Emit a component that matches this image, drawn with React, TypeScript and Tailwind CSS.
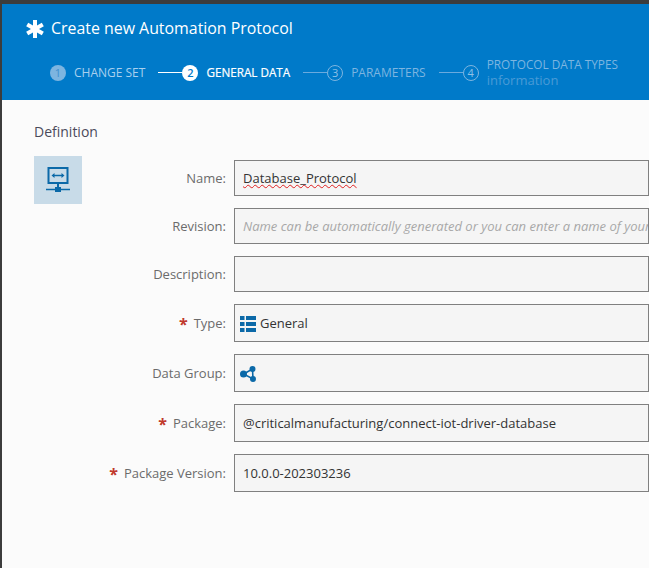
const font = { fontFamily: '"Open Sans", sans-serif' }

function Step({ n, label, state, size }: { n: number; label: string; state: 'done' | 'active' | 'todo'; size: string }) {
  return (
    <div className="flex shrink-0 items-center whitespace-nowrap">
      {state === 'done' && (
        <span className="flex h-4 w-4 items-center justify-center rounded-full bg-[#7db5e0] text-[11px] text-[#3f8fce]">{n}</span>
      )}
      {state === 'active' && (
        <span className="flex h-4 w-4 items-center justify-center rounded-full bg-white text-[11px] font-semibold text-[#007ac9]">{n}</span>
      )}
      {state === 'todo' && (
        <span className="flex h-4 w-4 items-center justify-center rounded-full border border-[#7db5e0] text-[11px] text-[#8fc0e6]">{n}</span>
      )}
      <span
        className={
          state === 'active'
            ? `ml-2 ${size} text-white [-webkit-text-stroke:0.2px_white]`
            : state === 'done'
              ? `ml-2 ${size} text-[#a9d0ee]`
              : `ml-2 ${size} text-[#7db5e0]`
        }
      >
        {label}
      </span>
    </div>
  )
}

function Line({ on }: { on?: boolean }) {
  return <div className={on ? 'ml-[13px] h-px w-6 shrink-0 bg-white' : 'ml-[13px] h-px w-6 shrink-0 bg-[#6aaade]'} />
}

function Label({ text, required }: { text: string; required?: boolean }) {
  return (
    <div className="flex w-[200px] shrink-0 items-center justify-end pr-2 pt-px text-[13px] text-[#6b6b6b]">
      {required && <span className="mr-[6px] text-[16px] font-bold leading-none text-[#c0392b]">*</span>}
      {text}:
    </div>
  )
}

function Field({ label, required, tall, children }: { label: string; required?: boolean; tall?: boolean; children?: React.ReactNode }) {
  return (
    <div className="mb-3 flex">
      <Label text={label} required={required} />
      <div
        className={
          tall
            ? 'flex h-[38px] min-w-0 flex-1 items-center overflow-hidden whitespace-nowrap border border-[#808080] bg-[#f5f5f5] pl-2 pt-px text-[13px] text-[#333]'
            : 'flex h-9 min-w-0 flex-1 items-center overflow-hidden whitespace-nowrap border border-[#808080] bg-[#f5f5f5] pl-2 pt-px text-[13px] text-[#333]'
        }
      >
        {children}
      </div>
    </div>
  )
}

function StarIcon() {
  return (
    <svg width="18" height="18" viewBox="0 0 18 18" className="shrink-0" stroke="white" strokeWidth="4" strokeLinecap="butt">
      <path d="M9 0v18" />
      <path d="M1.2 4.5l15.6 9" />
      <path d="M1.2 13.5l15.6-9" />
    </svg>
  )
}

function ProtocolIcon() {
  return (
    <svg width="26" height="26" viewBox="0 0 26 26" fill="none">
      <rect x="3.5" y="1" width="19" height="15" stroke="#0b69a8" strokeWidth="2" />
      <path d="M8 8.5h10" stroke="#0b69a8" strokeWidth="1.5" />
      <path d="M6.5 8.5 9.5 6v5zM19.5 8.5 16.5 6v5z" fill="#0b69a8" />
      <path d="M13 16v5" stroke="#0b69a8" strokeWidth="2" />
      <path d="M1 22.5h24" stroke="#0b69a8" strokeWidth="1.5" />
      <rect x="10" y="20" width="6" height="5" fill="#0b69a8" />
    </svg>
  )
}

function ListIcon() {
  return (
    <svg width="16" height="16" viewBox="0 0 16 16" fill="#0b69a8" className="-ml-[3px] mr-1 shrink-0">
      <rect x="0" y="0" width="4.5" height="4" />
      <rect x="6" y="0" width="10" height="4" />
      <rect x="0" y="6" width="4.5" height="4" />
      <rect x="6" y="6" width="10" height="4" />
      <rect x="0" y="12" width="4.5" height="4" />
      <rect x="6" y="12" width="10" height="4" />
    </svg>
  )
}

function ShareIcon() {
  return (
    <svg width="16" height="16" viewBox="0 0 16 16" className="-ml-[3px] shrink-0">
      <path d="M3.5 8 12.5 3 13 13z" fill="none" stroke="#0b69a8" strokeWidth="1.6" />
      <circle cx="3.5" cy="8" r="3.5" fill="#0b69a8" />
      <circle cx="12.5" cy="3" r="3" fill="#0b69a8" />
      <circle cx="13" cy="13" r="3" fill="#0b69a8" />
    </svg>
  )
}

export default function App() {
  return (
    <div className="h-[568px] w-[649px] overflow-hidden bg-[#3c3c3c] pl-[2px] pt-1" style={font}>
      <div className="flex h-full flex-col">
        {/* Header */}
        <div className="h-[96px] shrink-0 overflow-hidden bg-[#007ac9] pl-6">
          <div className="flex items-center pt-[13px] text-white">
            <StarIcon />
            <span className="ml-[7px] text-[15.9px]">Create new Automation Protocol</span>
          </div>
          <div className="mt-[15px] flex items-center pl-6">
            <Step n={1} label="CHANGE SET" state="done" size="text-xs" />
            <Line on />
            <Step n={2} label="GENERAL DATA" state="active" size="text-[11.7px]" />
            <Line />
            <Step n={3} label="PARAMETERS" state="todo" size="text-xs" />
            <Line />
            <div className="flex shrink-0 items-center">
              <span className="flex h-4 w-4 items-center justify-center rounded-full border border-[#7db5e0] text-[11px] text-[#8fc0e6]">4</span>
              <div className="mb-[2px] ml-2 text-[11.8px] leading-4 text-[#7db5e0]">
                <div className="whitespace-nowrap">PROTOCOL DATA TYPES</div>
                <div className="text-[13px] text-[#4a9ad6]">information</div>
              </div>
            </div>
          </div>
        </div>

        {/* Body */}
        <div className="flex-1 bg-[#fbfbfb] pl-[32px]">
          <div className="pt-[23px] text-sm leading-[18px] text-[#4a4a5a]">Definition</div>
          <div className="relative mt-[15px]">
            <div className="absolute left-0 top-0 flex h-12 w-12 items-center justify-center bg-[#c8dbe8]">
              <ProtocolIcon />
            </div>
            <div className="pt-[4px]">
              <Field label="Name">
                <span className="underline decoration-[#e02020] decoration-wavy decoration-[1.2px]">Database_Protocol</span>
              </Field>
              <Field label="Revision">
                <span className="italic text-[#a8a8a8]">Name can be automatically generated or you can enter a name of your</span>
              </Field>
              <Field label="Description" />
              <Field label="Type" required tall>
                <ListIcon />
                General
              </Field>
              <Field label="Data Group" tall>
                <ShareIcon />
              </Field>
              <Field label="Package" required tall>
                @criticalmanufacturing/connect-iot-driver-database
              </Field>
              <Field label="Package Version" required tall>
                10.0.0-202303236
              </Field>
            </div>
          </div>
        </div>
      </div>
    </div>
  )
}
